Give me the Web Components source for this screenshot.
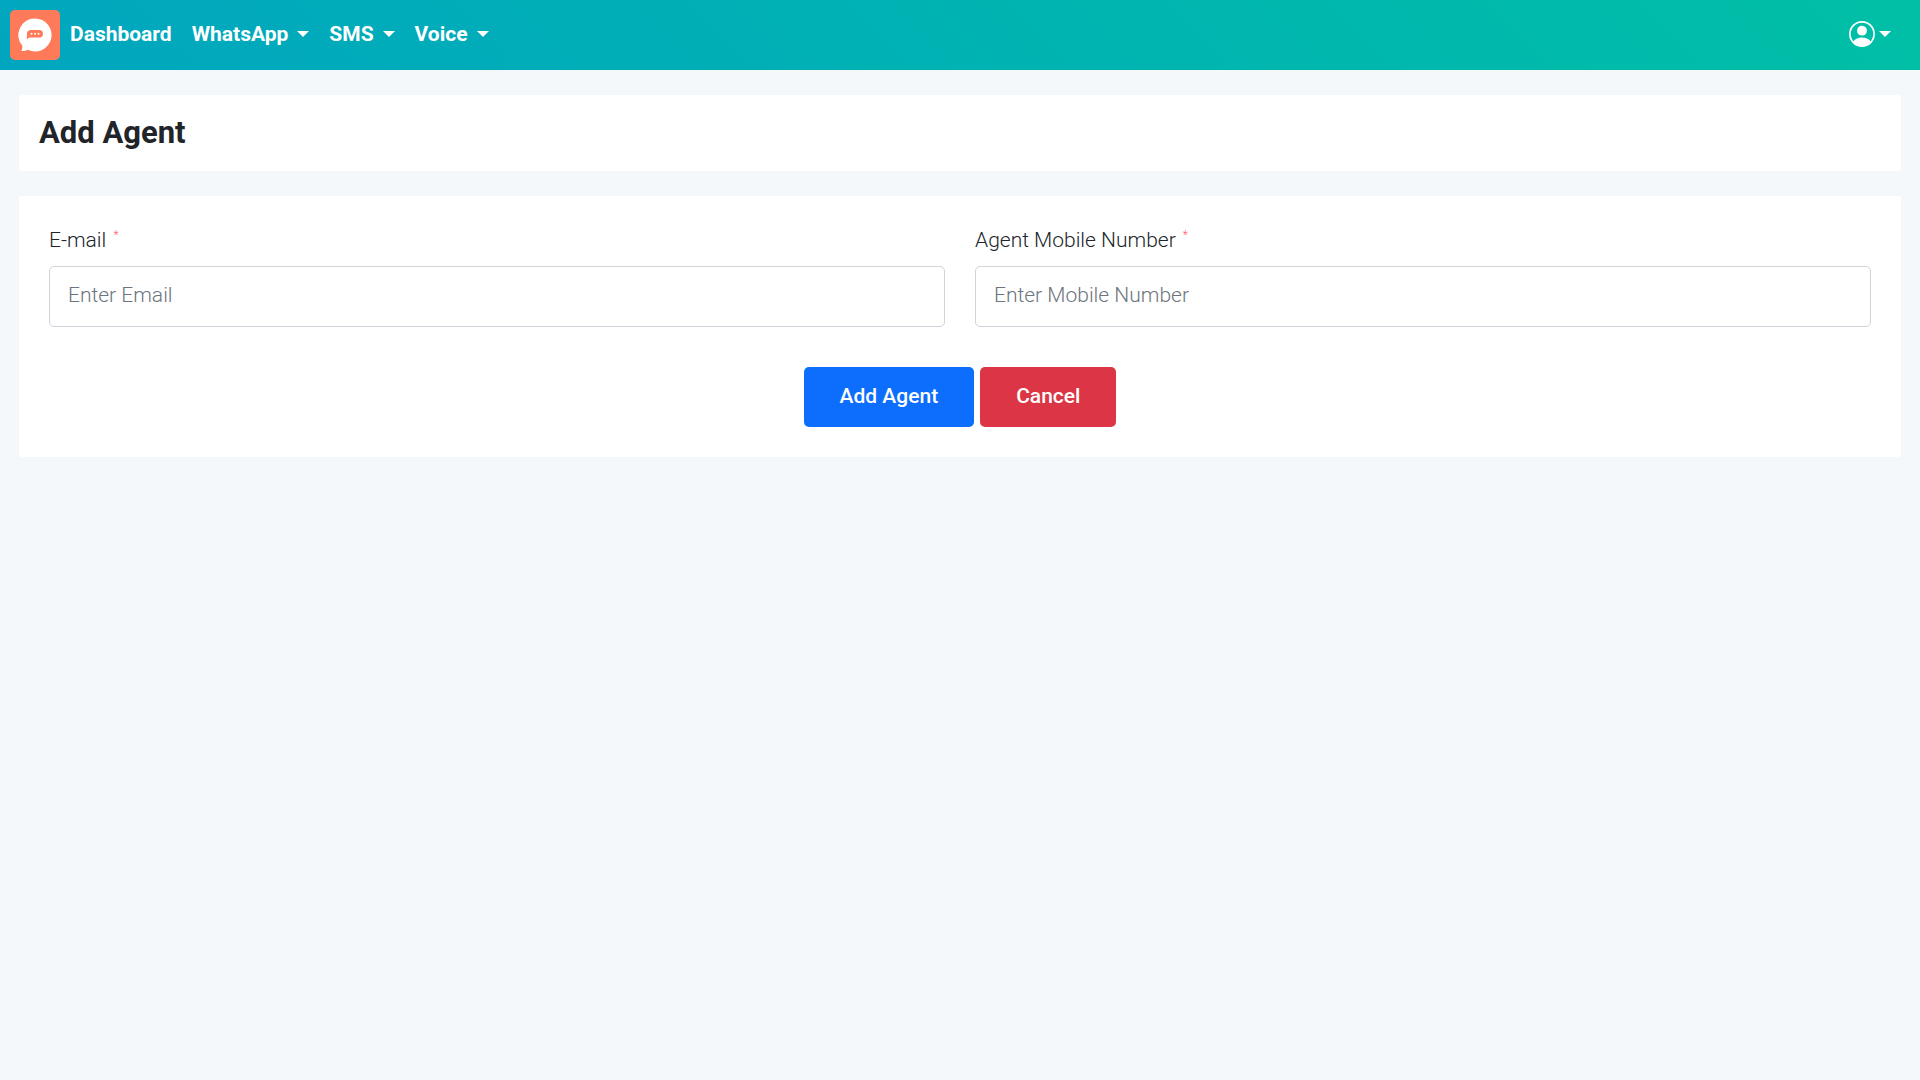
<!DOCTYPE html>
<html lang="en">
<head>
<meta charset="utf-8">
<meta name="viewport" content="width=device-width, initial-scale=1">
<title>Add Agent</title>
<style>
  html { background: #f4f8fb; }
  body { margin: 0; font-family: Roboto, "Open Sans", sans-serif; font-size: 21px; line-height: 30px; color: #212529; }
  main { display: flex; flex-direction: column; gap: 25px; padding: 25px 19px; }
  h1 { margin: 0; font-size: 31px; line-height: 36px; font-weight: 700; }
</style>
</head>
<body>
<app-navbar>
  <nav-item href="#dashboard">Dashboard</nav-item>
  <nav-item href="#whatsapp" menu>WhatsApp</nav-item>
  <nav-item href="#sms" menu>SMS</nav-item>
  <nav-item href="#voice" menu>Voice</nav-item>
</app-navbar>
<main>
  <page-card compact><h1>Add Agent</h1></page-card>
  <page-card>
    <agent-form>
      <form-field label="E-mail" type="email" placeholder="Enter Email"></form-field>
      <form-field label="Agent Mobile Number" type="tel" placeholder="Enter Mobile Number"></form-field>
      <action-button slot="actions">Add Agent</action-button>
      <action-button slot="actions" variant="danger">Cancel</action-button>
    </agent-form>
  </page-card>
</main>
<script>
class BaseElement extends HTMLElement {
  render(html) { this.attachShadow({ mode: 'open' }).innerHTML = html; }
}

customElements.define('app-navbar', class extends BaseElement {
  connectedCallback() {
    this.render(`
      <style>
        :host { display: block; color: #fff; background: linear-gradient(45deg, #00a6bf, #00bfa6); }
        header { display: flex; align-items: center; justify-content: space-between; padding: 10px 19px 10px 10px; }
        .start, nav { display: flex; align-items: center; }
        .logo { display: block; height: 50px; }
        svg { display: block; }
        button { display: flex; align-items: center; gap: 4px; padding: 9px 10px 11px; border: 0; background: none; color: inherit; }
        .caret { border: 6px solid transparent; border-top-color: currentColor; border-bottom: 0; }
      </style>
      <header>
        <div class="start">
          <a class="logo" href="#home" aria-label="Home">
            <svg width="50" height="50" viewBox="0 0 50 50">
              <rect width="50" height="50" rx="5" fill="#ff7a59"/>
              <path d="M25 8.500a16.500 16.500 0 1 1-7.200 31.300c-1.500.8-4 1.400-6.600 1.300 1-1.700 1.300-3.800 1.200-5.400A16.500 16.500 0 0 1 25 8.500z" fill="#fff"/>
              <path d="M20.500 20H29a4 4 0 0 1 4 4a3.500 3.500 0 0 1-4 3.500H20.500c-1.500 0-2.500.6-3.600 2V24a4 4 0 0 1 3.600-4z" fill="#ff7a59"/>
              <g fill="#fff"><circle cx="21.500" cy="23.800" r="1"/><circle cx="25" cy="23.800" r="1"/><circle cx="28.500" cy="23.800" r="1"/></g>
            </svg>
          </a>
          <nav aria-label="Main"><slot></slot></nav>
        </div>
        <button type="button" aria-label="Account">
          <svg width="26" height="26" viewBox="0 0 26 26" fill="none">
            <circle cx="13" cy="13" r="12.100" stroke="#fff" stroke-width="1.700"/>
            <circle cx="13" cy="9.700" r="4.900" fill="#fff"/>
            <path d="M4 21c1.500-3 5-4.500 9-4.500s7.500 1.500 9 4.500a12 12 0 0 1-18 0z" fill="#fff"/>
          </svg>
          <span class="caret"></span>
        </button>
      </header>`);
  }
});

customElements.define('nav-item', class extends BaseElement {
  connectedCallback() {
    this.render(`
      <style>
        :host { display: block; font-weight: 700; }
        a { display: flex; align-items: center; gap: 9px; padding: 7px 10px 9px; color: inherit; text-decoration: none; }
        .caret { display: none; border: 6px solid transparent; border-top-color: currentColor; border-bottom: 0; }
        :host([menu]) .caret { display: block; }
      </style>
      <a href="${this.getAttribute('href')}"><slot></slot><span class="caret"></span></a>`);
  }
});

customElements.define('page-card', class extends BaseElement {
  connectedCallback() {
    this.render(`
      <style>
        :host { display: block; padding: 30px; background: #fff; border-radius: 3px; }
        :host([compact]) { padding: 20px; }
      </style>
      <slot></slot>`);
  }
});

customElements.define('agent-form', class extends BaseElement {
  connectedCallback() {
    this.render(`
      <style>
        :host { display: block; }
        .fields { display: grid; grid-template-columns: 1fr 1fr; gap: 30px; }
        .actions { display: flex; justify-content: center; gap: 6px; margin-top: 40px; }
      </style>
      <div class="fields"><slot></slot></div>
      <div class="actions"><slot name="actions"></slot></div>`);
  }
});

customElements.define('form-field', class extends BaseElement {
  connectedCallback() {
    this.render(`
      <style>
        :host { display: block; line-height: 28px; font-weight: 300; }
        label { display: block; margin-bottom: 12px; }
        sup { margin-left: 2px; font-size: 12px; line-height: 0; color: #ff5c6c; }
        input { display: block; box-sizing: border-box; width: 100%; height: 61px; padding: 0 18px 3px; border: 1px solid #ced4da; border-radius: 5px; background: #fff; font: inherit; color: inherit; }
        input::placeholder { color: #6c757d; opacity: 1; }
      </style>
      <label for="field">${this.getAttribute('label')} <sup>*</sup></label>
      <input id="field" type="${this.getAttribute('type')}" placeholder="${this.getAttribute('placeholder')}">`);
  }
});

customElements.define('action-button', class extends BaseElement {
  connectedCallback() {
    this.render(`
      <style>
        :host { display: block; --fill: #0d6efd; }
        :host([variant="danger"]) { --fill: #dc3545; }
        button { display: block; padding: 14px 36px 16px; border: 0; border-radius: 5px; background: var(--fill); color: #fff; font: inherit; font-weight: 500; }
      </style>
      <button type="button"><slot></slot></button>`);
  }
});
</script>
</body>
</html>
